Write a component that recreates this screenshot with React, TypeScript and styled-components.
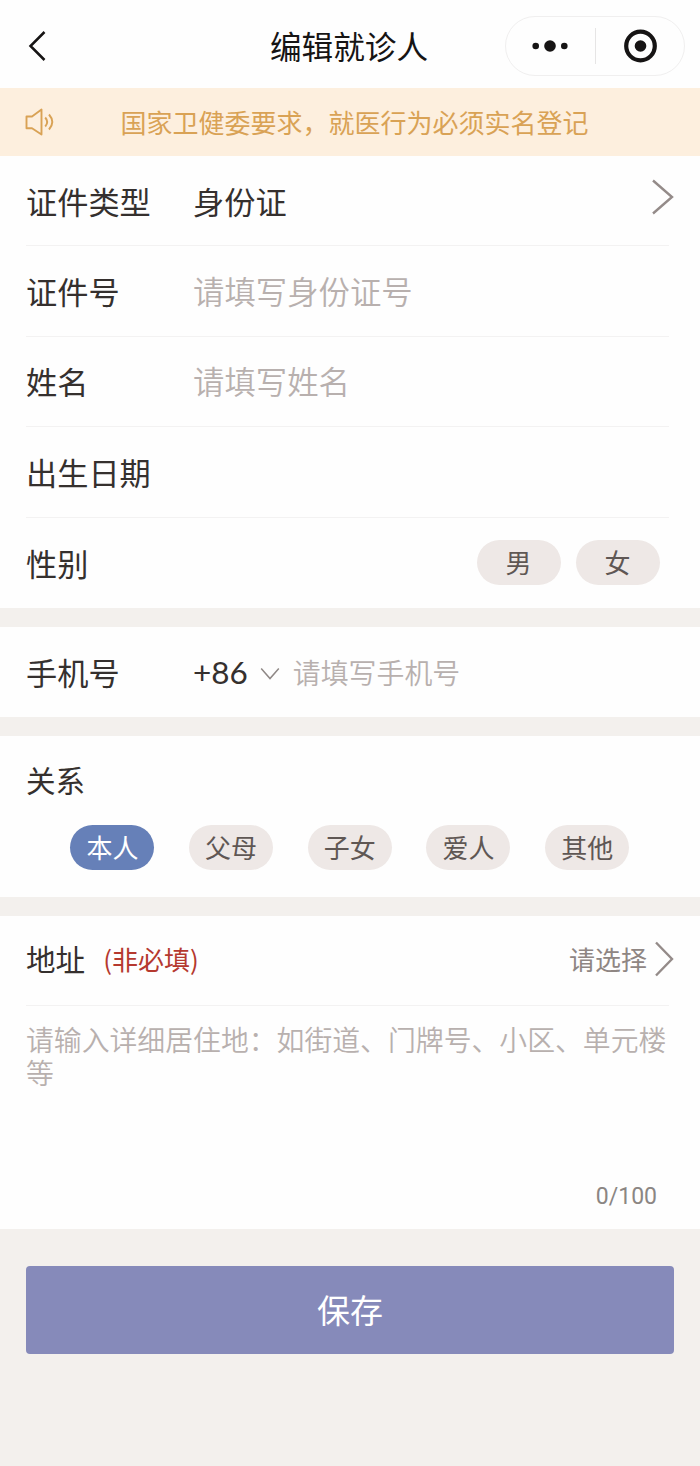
import React, { useState } from 'react';
import styled, { createGlobalStyle } from 'styled-components';

const GlobalStyle = createGlobalStyle`
  * { box-sizing: border-box; }
  body {
    margin: 0;
    background: #f3f0ed;
    font-family: "Noto Sans CJK SC", sans-serif;
    color: #35302e;
  }
  button { font-family: inherit; border: 0; padding: 0; }
`;

const Page = styled.main`
  width: 700px;
  min-height: 1466px;
  background: #f3f0ed;
`;

const Header = styled.header`
  display: grid;
  grid-template-columns: 242px 1fr 180px;
  align-items: center;
  height: 88px;
  padding: 4px 15px 0 28px;
  background: #fefefe;
`;

const BackButton = styled.button`
  display: flex;
  width: 20px;
  background: none;
`;

const Title = styled.h1`
  margin: 0;
  padding-bottom: 2px;
  font-size: 31.6px;
  font-weight: 400;
  line-height: 40px;
  color: #161414;
`;

const Capsule = styled.div`
  display: flex;
  align-items: center;
  height: 60px;
  border: 1.5px solid #f0efef;
  border-radius: 30px;
`;

const CapsuleHalf = styled.div`
  display: flex;
  flex: 1;
  justify-content: center;
`;

const CapsuleDivider = styled.div`
  width: 1px;
  height: 36px;
  background: #e6e5e5;
`;

const Notice = styled.div`
  display: flex;
  align-items: center;
  height: 68px;
  padding-left: 24px;
  background: #fdefde;
  color: #d9a255;
`;

const NoticeText = styled.span`
  margin-left: 64.5px;
  font-size: 26px;
  line-height: 36px;
`;

const Section = styled.section<{ $height: number }>`
  height: ${(p) => p.$height}px;
  margin-bottom: 19px;
  background: #fefefe;
`;

const Row = styled.div<{ $divided?: boolean; $lift?: number }>`
  display: flex;
  align-items: center;
  height: 90.4px;
  margin: 0 31px 0 26px;
  padding-bottom: ${(p) => p.$lift ?? 0}px;
  border-bottom: ${(p) => (p.$divided ? '1px solid #f3f2f2' : '0')};
`;

const Label = styled.span<{ $width?: number; $size?: number }>`
  width: ${(p) => (p.$width ? `${p.$width}px` : 'auto')};
  font-size: ${(p) => p.$size ?? 31.2}px;
  line-height: 44px;
  white-space: nowrap;
`;

const Value = styled.span`
  font-size: 31.2px;
  line-height: 44px;
`;

const Placeholder = styled.span<{ $size?: number }>`
  font-size: ${(p) => p.$size ?? 31.4}px;
  line-height: 44px;
  font-weight: 350;
  color: #b8b0ae;
`;

const DialCode = styled.span`
  font-family: Lato, sans-serif;
  font-size: 31.5px;
  line-height: 44px;
`;

const DownIcon = styled.svg`
  margin: 4px 13px 0 12px;
`;

const ForwardIcon = styled.svg<{ $raise: number }>`
  flex: none;
  margin: 0 -5px ${(p) => p.$raise}px 0;
`;

const RowEnd = styled.div`
  display: flex;
  align-items: center;
  gap: 7px;
  margin-left: auto;
`;

const GenderOptions = styled.div`
  display: flex;
  gap: 15px;
  margin: 0 9.5px 0 auto;
`;

const Pill = styled.button<{ $active?: boolean }>`
  width: 84px;
  height: 45px;
  padding-bottom: 2px;
  border-radius: 23px;
  background: ${(p) => (p.$active ? '#6680b8' : '#eee8e6')};
  color: ${(p) => (p.$active ? '#fff' : '#5f5754')};
  font-size: 26px;
  line-height: 42px;
`;

const RelationLabel = styled.div`
  padding: 22px 0 0 26px;
`;

const RelationOptions = styled.div`
  display: flex;
  gap: 34.7px;
  padding: 23px 0 0 70.4px;
`;

const Optional = styled.span`
  margin-left: 18px;
  font-size: 26px;
  line-height: 44px;
  color: #b5392f;
`;

const SelectHint = styled.span`
  font-size: 26px;
  line-height: 44px;
  color: #8f8683;
`;

const AddressInput = styled.div`
  display: flex;
  flex-direction: column;
  justify-content: space-between;
  height: 223px;
  padding: 17px 33px 14px 26px;
`;

const AddressHint = styled.p`
  margin: 0;
  font-size: 27.85px;
  font-weight: 350;
  line-height: 33px;
  color: #b8b0ae;
`;

const Counter = styled.span`
  align-self: flex-end;
  margin-right: 10px;
  font-family: Roboto, sans-serif;
  font-size: 23px;
  line-height: 36px;
  color: #8b8683;
`;

const SaveButton = styled.button`
  display: block;
  width: 648px;
  height: 88px;
  margin: 37px 0 0 26px;
  padding-bottom: 3px;
  border-radius: 4px;
  background: #868aba;
  color: #fff;
  font-size: 33px;
  line-height: 84px;
`;

const Forward = ({ raise, width }: { raise: number; width: number }) => (
  <ForwardIcon $raise={raise} width={width} height="36" viewBox={`0 0 ${width} 36`} fill="none">
    <path d={`M2 1.5 L${width - 2} 18 L2 34.5`} stroke="#948b89" strokeWidth="2.4" />
  </ForwardIcon>
);

const relations = ['本人', '父母', '子女', '爱人', '其他'];
const genders = ['男', '女'];

export default function App() {
  const [relation, setRelation] = useState('本人');
  const [gender, setGender] = useState('');

  return (
    <Page>
      <GlobalStyle />
      <Header>
        <BackButton aria-label="返回">
          <svg width="20" height="32" viewBox="0 0 20 32" fill="none">
            <path d="M16.5 2 L2.5 16 L16.5 30" stroke="#161414" strokeWidth="2.5" />
          </svg>
        </BackButton>
        <Title>编辑就诊人</Title>
        <Capsule>
          <CapsuleHalf>
            <svg width="38" height="14" viewBox="0 0 38 14" fill="#161414">
              <circle cx="4.7" cy="7" r="3.3" />
              <circle cx="19" cy="7" r="5.8" />
              <circle cx="33.3" cy="7" r="3.3" />
            </svg>
          </CapsuleHalf>
          <CapsuleDivider />
          <CapsuleHalf>
            <svg width="34" height="34" viewBox="0 0 34 34">
              <circle cx="17.5" cy="17" r="14.3" fill="none" stroke="#161414" strokeWidth="4.2" />
              <circle cx="17.5" cy="17" r="5.8" fill="#161414" />
            </svg>
          </CapsuleHalf>
        </Capsule>
      </Header>

      <Notice>
        <svg width="32" height="32" viewBox="0 0 32 32" fill="none" stroke="currentColor" strokeWidth="1.9" strokeLinejoin="round">
          <path d="M2.5 10.5 H8 L17.5 3.5 V28.5 L8 22.3 H2.5 Z" />
          <path d="M21.2 11.5 Q25.2 16 21.2 20.5" />
          <path d="M25 8.5 Q31.6 16 25 23.5" />
        </svg>
        <NoticeText>国家卫健委要求，就医行为必须实名登记</NoticeText>
      </Notice>

      <Section $height={452}>
        <Row $divided>
          <Label $width={167}>证件类型</Label>
          <Value>身份证</Value>
          <RowEnd>
            <Forward raise={8} width={23} />
          </RowEnd>
        </Row>
        <Row $divided>
          <Label $width={167}>证件号</Label>
          <Placeholder>请填写身份证号</Placeholder>
        </Row>
        <Row $divided>
          <Label $width={167}>姓名</Label>
          <Placeholder>请填写姓名</Placeholder>
        </Row>
        <Row $divided>
          <Label>出生日期</Label>
        </Row>
        <Row>
          <Label>性别</Label>
          <GenderOptions>
            {genders.map((g) => (
              <Pill key={g} $active={gender === g} onClick={() => setGender(g)}>{g}</Pill>
            ))}
          </GenderOptions>
        </Row>
      </Section>

      <Section $height={90}>
        <Row $lift={1}>
          <Label $width={167}>手机号</Label>
          <DialCode>+86</DialCode>
          <DownIcon width="20" height="14" viewBox="0 0 20 14" fill="none">
            <path d="M1.2 1.5 L10 11.5 L18.8 1.5" stroke="#8f8886" strokeWidth="1.5" />
          </DownIcon>
          <Placeholder $size={27.9}>请填写手机号</Placeholder>
        </Row>
      </Section>

      <Section $height={161}>
        <RelationLabel>
          <Label $size={29.6}>关系</Label>
        </RelationLabel>
        <RelationOptions>
          {relations.map((r) => (
            <Pill key={r} $active={relation === r} onClick={() => setRelation(r)}>{r}</Pill>
          ))}
        </RelationOptions>
      </Section>

      <Section $height={313}>
        <Row $divided $lift={3}>
          <Label $size={29.6}>地址</Label>
          <Optional>(非必填)</Optional>
          <RowEnd>
            <SelectHint>请选择</SelectHint>
            <Forward raise={1} width={20} />
          </RowEnd>
        </Row>
        <AddressInput>
          <AddressHint>请输入详细居住地：如街道、门牌号、小区、单元楼等</AddressHint>
          <Counter>0/100</Counter>
        </AddressInput>
      </Section>

      <SaveButton>保存</SaveButton>
    </Page>
  );
}
